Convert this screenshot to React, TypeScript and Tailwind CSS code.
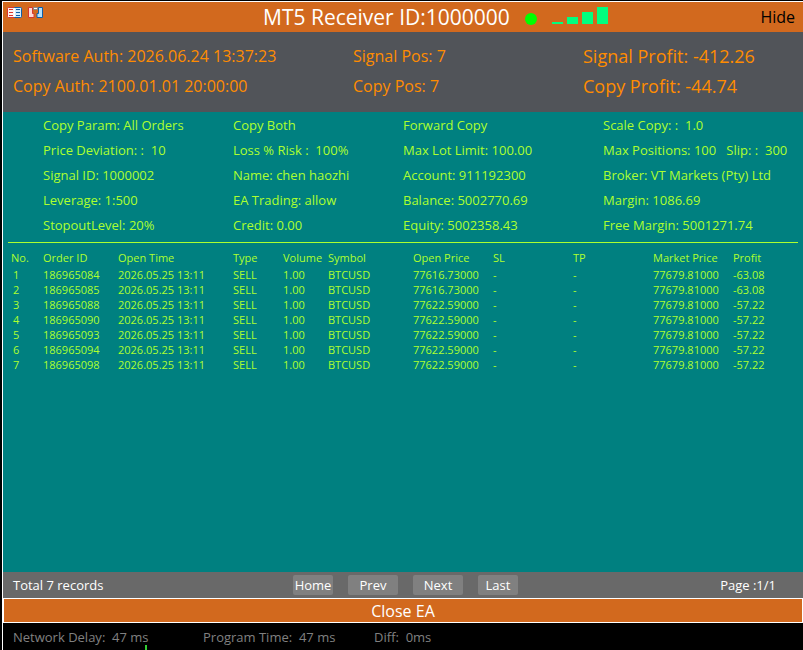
import type { ReactNode } from "react";

const summary = [
  ["Software Auth: 2026.06.24 13:37:23", "Signal Pos: 7", "Signal Profit: -412.26"],
  ["Copy Auth: 2100.01.01 20:00:00", "Copy Pos: 7", "Copy Profit: -44.74"],
];

const params = [
  ["Copy Param: All Orders", "Copy Both", "Forward Copy", "Scale Copy: :  1.0"],
  ["Price Deviation: :  10", "Loss % Risk :  100%", "Max Lot Limit: 100.00", "Max Positions: 100   Slip: :  300"],
  ["Signal ID: 1000002", "Name: chen haozhi", "Account: 911192300", "Broker: VT Markets (Pty) Ltd"],
  ["Leverage: 1:500", "EA Trading: allow", "Balance: 5002770.69", "Margin: 1086.69"],
  ["StopoutLevel: 20%", "Credit: 0.00", "Equity: 5002358.43", "Free Margin: 5001271.74"],
];

const columns = [
  { label: "No.", width: "w-[35px]" },
  { label: "Order ID", width: "w-[75px]" },
  { label: "Open Time", width: "w-[115px]" },
  { label: "Type", width: "w-[50px]" },
  { label: "Volume", width: "w-[45px]" },
  { label: "Symbol", width: "w-[85px]" },
  { label: "Open Price", width: "w-[80px]" },
  { label: "SL", width: "w-[80px]" },
  { label: "TP", width: "w-[80px]" },
  { label: "Market Price", width: "w-[80px]" },
  { label: "Profit", width: "w-auto" },
];

const orders = [
  { id: "186965084", open: "77616.73000", profit: "-63.08" },
  { id: "186965085", open: "77616.73000", profit: "-63.08" },
  { id: "186965088", open: "77622.59000", profit: "-57.22" },
  { id: "186965090", open: "77622.59000", profit: "-57.22" },
  { id: "186965093", open: "77622.59000", profit: "-57.22" },
  { id: "186965094", open: "77622.59000", profit: "-57.22" },
  { id: "186965098", open: "77622.59000", profit: "-57.22" },
];

const LedgerIcon = () => (
  <svg width="15" height="11" viewBox="0 0 15 11" aria-hidden="true">
    <path d="M7.5 0.5H1.5a1 1 0 0 0-1 1v8a1 1 0 0 0 1 1h6z" fill="#fff1ef" stroke="#d8362c" />
    <path d="M7.5 0.5h6a1 1 0 0 1 1 1v8a1 1 0 0 1-1 1h-6z" fill="#d5ecfb" stroke="#0f5fa8" />
    <path d="M7.5 1v9" stroke="#ffffff" />
    <path d="M2 2.5h4M2 5.5h4M2 8.5h4" stroke="#d8362c" />
    <path d="M9 2.5h4M9 5.5h4M9 8.5h4" stroke="#0f5fa8" />
  </svg>
);

const ClipboardIcon = () => (
  <svg width="15" height="11" viewBox="0 0 15 11" aria-hidden="true">
    <path d="M4.5 0.5h-4v10h5.5v-4h-1.5z" fill="#ffd9d4" stroke="#d8362c" />
    <path d="M10.5 0.5h4v10h-5.5v-4h1.5z" fill="#b5e0fa" stroke="#0f5fa8" />
    <rect x="5" width="5" height="3" rx="1" fill="#8a8a8a" />
    <rect x="6" y="1" width="3" height="1" fill="#ffffff" />
  </svg>
);

const SignalBars = () => (
  <div className="flex items-end gap-1 pb-px" role="img" aria-label="Signal strength">
    <span className="h-0.5 w-[11px] bg-[#00ff7f]" />
    <span className="h-[7px] w-[11px] bg-[#00ff7f]" />
    <span className="h-3 w-[11px] bg-[#00ff7f]" />
    <span className="h-[17px] w-[11px] bg-[#00ff7f]" />
  </div>
);

const PagerButton = ({ className, children }: { className: string; children: ReactNode }) => (
  <button type="button" className={`h-5 rounded-xs bg-[#808080] text-center leading-5 ${className}`}>
    {children}
  </button>
);

const App = () => (
  <div className="flex min-h-screen flex-col bg-black pl-0.5 pt-px font-['Open_Sans','Noto_Sans',sans-serif]">
    <div className="flex flex-1 flex-col border-l border-t border-white">
      <header className="flex h-[30px] shrink-0 bg-[#d2691e]">
        <div className="flex w-[260px] gap-1.5 pl-1 pt-[5px]">
          <button type="button" aria-label="Ledger" className="h-[11px]">
            <LedgerIcon />
          </button>
          <button type="button" aria-label="Clipboard" className="h-[11px]">
            <ClipboardIcon />
          </button>
        </div>
        <h1 className="w-[262px] whitespace-nowrap text-[21px] leading-[30px] text-white">MT5 Receiver ID:1000000</h1>
        <div className="flex h-[23px] items-end gap-[15px]">
          <span className="size-3 rounded-full bg-[#00ff00]" />
          <SignalBars />
        </div>
        <button type="button" className="ml-auto pr-2 text-base text-black">
          Hide
        </button>
      </header>

      <section className="bg-[#515459] pb-[11px] pl-2.5 pt-[9px] text-[#ff8c00]">
        {summary.map(([auth, pos, profit]) => (
          <div key={auth} className="grid grid-cols-[340px_230px_1fr] whitespace-nowrap">
            <span className="text-base/[30px]">{auth}</span>
            <span className="text-base/[30px]">{pos}</span>
            <span className="text-lg/[30px]">{profit}</span>
          </div>
        ))}
      </section>

      <main className="flex-1 bg-[#008080] px-[5px] pt-px text-[#adff2f]">
        <section className="border-b border-[#adff2f] pb-1 pl-[35px] text-[13px]">
          {params.map((row) => (
            <div key={row[0]} className="grid grid-cols-[190px_170px_200px_1fr] leading-[25px] whitespace-pre">
              {row.map((text) => (
                <span key={text}>{text}</span>
              ))}
            </div>
          ))}
        </section>
        <table className="mt-1.5 w-full table-fixed whitespace-nowrap text-left text-[11px]">
          <thead>
            <tr className="h-[18px]">
              {columns.map(({ label, width }) => (
                <th key={label} scope="col" className={`p-0 font-normal leading-4 first:pl-[3px] ${width}`}>
                  {label}
                </th>
              ))}
            </tr>
          </thead>
          <tbody className="leading-[15px]">
            {orders.map(({ id, open, profit }, i) => (
              <tr key={id}>
                <td className="pl-[5px]">{i + 1}</td>
                <td>{id}</td>
                <td>2026.05.25 13:11</td>
                <td>SELL</td>
                <td>1.00</td>
                <td>BTCUSD</td>
                <td>{open}</td>
                <td>-</td>
                <td>-</td>
                <td>77679.81000</td>
                <td>{profit}</td>
              </tr>
            ))}
          </tbody>
        </table>
      </main>

      <nav className="flex h-[26px] shrink-0 items-center bg-[#696969] pl-2.5 text-[13px] leading-5 text-white">
        <span className="w-[280px]">Total 7 records</span>
        <div className="flex gap-[15px]">
          <PagerButton className="w-10">Home</PagerButton>
          <PagerButton className="w-[50px]">Prev</PagerButton>
          <PagerButton className="w-[50px]">Next</PagerButton>
          <PagerButton className="w-10">Last</PagerButton>
        </div>
        <span className="ml-auto pr-[27px]">Page :1/1</span>
      </nav>

      <button type="button" className="h-[25px] shrink-0 border border-white bg-[#d2691e] text-base/[24px] text-white">
        Close EA
      </button>

      <footer className="relative flex h-[27px] shrink-0 bg-black pl-2.5 text-[13px] leading-[28px] whitespace-pre text-[#808080]">
        <span className="w-[190px]">Network Delay:  47 ms</span>
        <span className="w-[171px]">Program Time:  47 ms</span>
        <span>Diff:  0ms</span>
        <i className="absolute bottom-0 left-[142px] h-[5px] w-0.5 bg-[#32cd32]" />
      </footer>
    </div>
  </div>
);

export default App;
